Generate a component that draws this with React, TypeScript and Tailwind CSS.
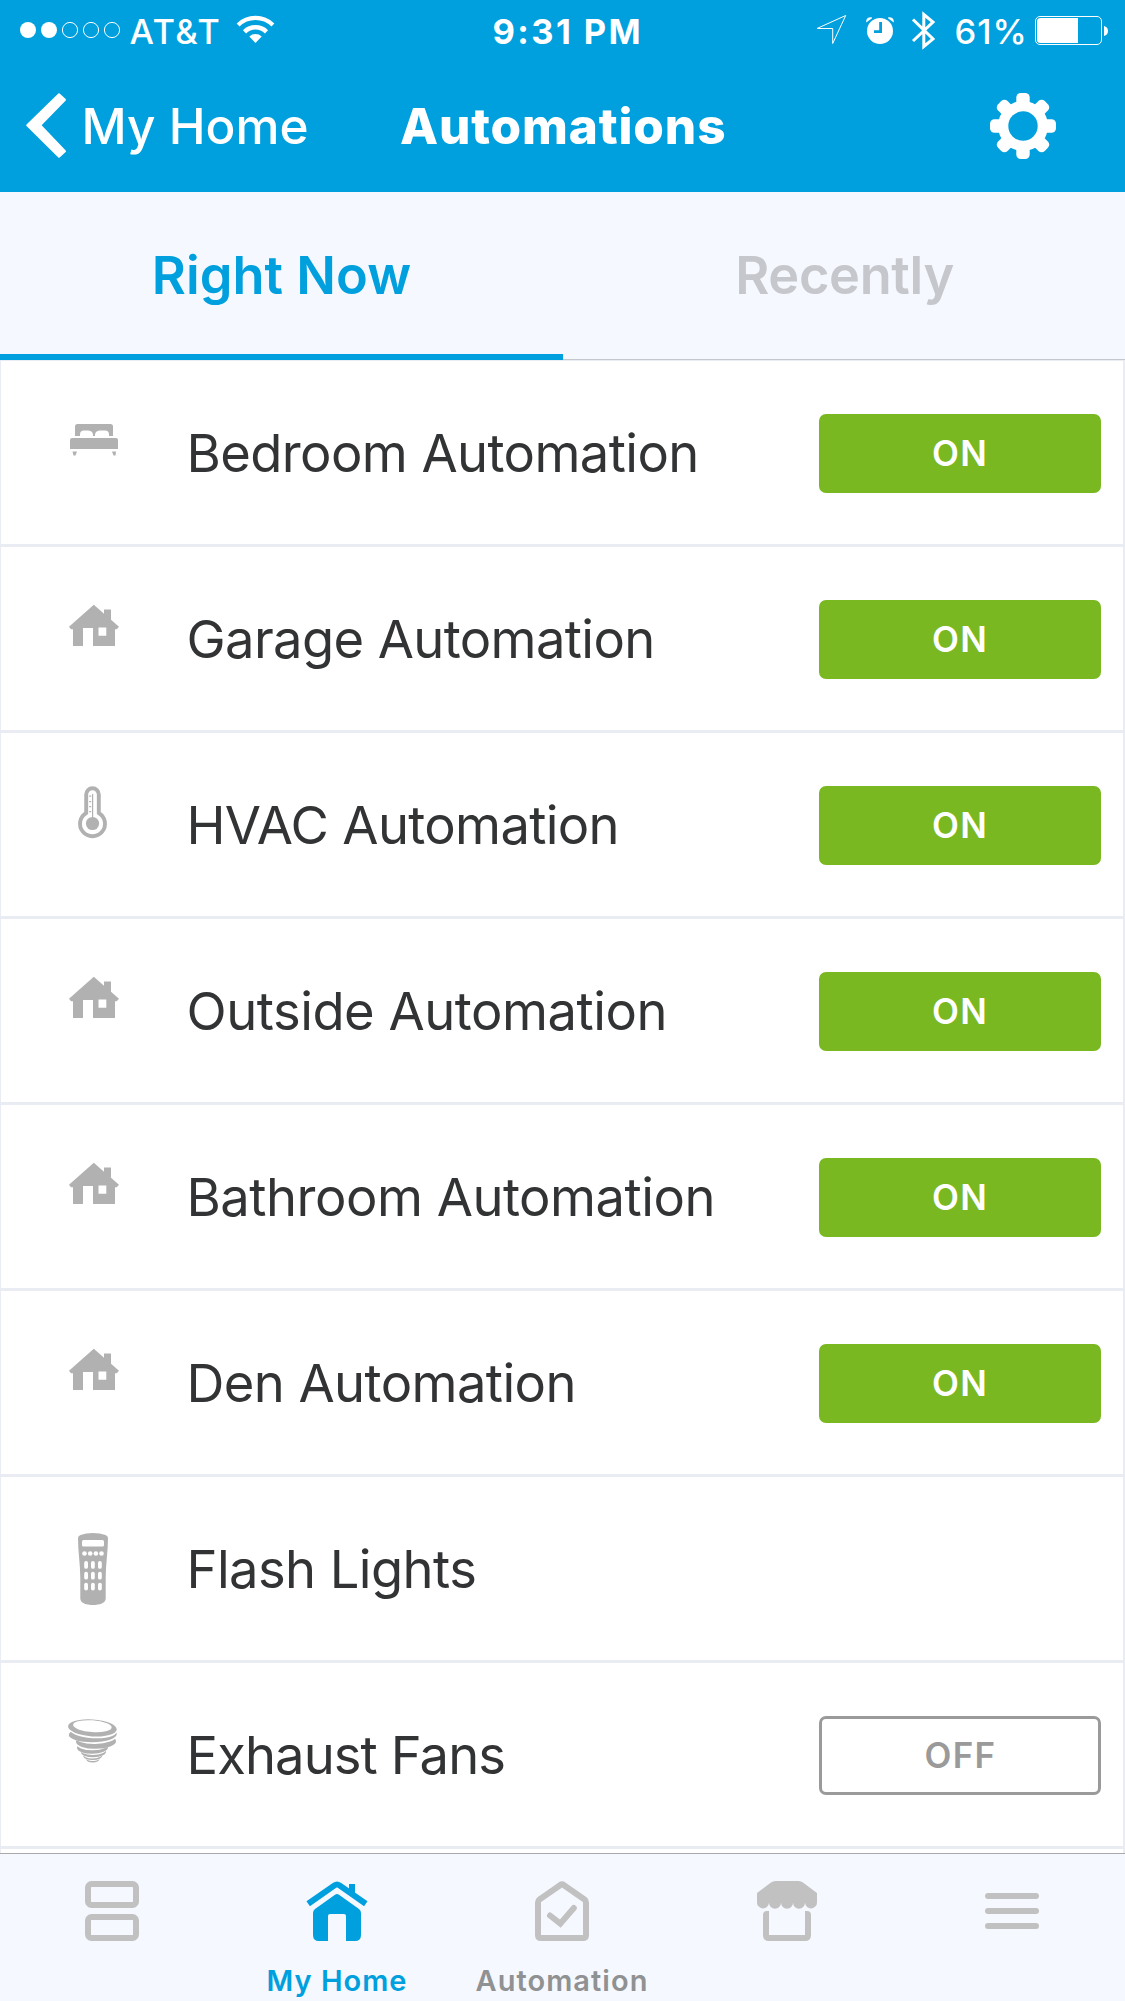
import type { ReactNode } from "react";

type IconName = "bed" | "house" | "thermometer" | "remote" | "fan";

const rows: { icon: IconName; label: string; state?: "ON" | "OFF"; tracking: string }[] = [
  { icon: "bed", label: "Bedroom Automation", state: "ON", tracking: "tracking-[-0.6px]" },
  { icon: "house", label: "Garage Automation", state: "ON", tracking: "tracking-[-0.62px]" },
  { icon: "thermometer", label: "HVAC Automation", state: "ON", tracking: "tracking-[-0.67px]" },
  { icon: "house", label: "Outside Automation", state: "ON", tracking: "tracking-[-0.48px]" },
  { icon: "house", label: "Bathroom Automation", state: "ON", tracking: "tracking-[-0.5px]" },
  { icon: "house", label: "Den Automation", state: "ON", tracking: "tracking-[-0.58px]" },
  { icon: "remote", label: "Flash Lights", tracking: "tracking-[-0.58px]" },
  { icon: "fan", label: "Exhaust Fans", state: "OFF", tracking: "tracking-[-0.9px]" },
];

// Whirl bands from the bottom up: cx, cy, rx, ry and whether the ellipse is a gap.
const whirl: [number, number, number, number, boolean][] = [
  [92.8, 96.5, 6.5, 2.9, false],
  [92.8, 93.5, 8, 4.6, true],
  [92.8, 93, 9.5, 4, false],
  [92.8, 89.5, 11, 6, true],
  [93.5, 89, 12.5, 5.3, false],
  [93, 85.5, 14, 6.5, true],
  [92.5, 84.5, 15.5, 6.3, false],
  [93, 80.3, 17, 7, true],
  [96, 78.5, 20, 7.3, false],
  [95, 73.5, 21, 7.5, true],
  [92.8, 71.5, 24, 7.8, false],
  [92.8, 67.2, 23.8, 8, true],
  [92.4, 64.9, 24.4, 8.5, false],
  [92.4, 63.2, 19.3, 5.9, true],
];

const glyphs: Record<IconName, ReactNode> = {
  bed: (
    <>
      <path d="M75 75V65.5q0-2.5 2.500-2.500h33q2.500 0 2.500 2.500V75h-4v-1.500q0-4-4-4h-4.500q-5 0-5.500 4V75h-2v-1.500q-.5-4-5.500-4H84q-4 0-4 4V75z" />
      <path d="M72 77h44q2 0 2 2v9H70v-9q0-2 2-2z" />
      <path d="M72.500 90.500h4.500l-1.500 4h-2zM112 90.500h4l-.5 4h-2z" />
    </>
  ),
  house: (
    <path
      fillRule="evenodd"
      d="M93.800 57.700L104 66.700V62.500h7v10.300l8 7-2.300 2.500H115V99H93V81H83v18H73V82.300h-2L69 79.700zM98.500 80.500v8.300h7.800v-8.300z"
    />
  ),
  thermometer: (
    <>
      <path
        d="M86.200 61.500a6.300 6.300 0 0 1 12.600 0V80a12.500 12.500 0 1 1-12.600 0z"
        fill="none"
        stroke="#b1b1b1"
        strokeWidth="3.900"
      />
      <circle cx="92.500" cy="90.500" r="6.600" />
      <path d="M92 61h1.200v24H92zM89.200 62.500h2v1.200h-2zM89.200 68h2v1.200h-2zM89.200 73h2v1.200h-2zM89.200 78h2v1.200h-2z" />
    </>
  ),
  remote: (
    <>
      <path d="M78 61q0-2 2.500-3Q86 56 93 56t12.500 2q2.500 1 2.500 3c0 14-2.300 26-2.300 40v20.500c0 4.500-6 6.500-12.700 6.500s-12.700-2-12.700-6.500V101c0-14-2.300-26-2.300-40z" />
      <g fill="#fff">
        <rect x="82" y="63" width="22" height="6.500" rx="1.500" />
        {[84.5, 90.2, 95.9, 101.5].map((x) => (
          <circle key={x} cx={x} cy="76.500" r="2.300" />
        ))}
        {[84.2, 91, 98].map((x) =>
          [84, 94.8, 105.7].map((y) => (
            <rect key={`${x}-${y}`} x={x} y={y} width="3.800" height="7.800" rx="1.900" />
          )),
        )}
      </g>
    </>
  ),
  fan: (
    <>
      {whirl.map(([cx, cy, rx, ry, gap]) => (
        <ellipse
          key={cy}
          cx={cx}
          cy={cy}
          rx={rx}
          ry={ry}
          fill={gap ? "#fff" : "#b1b1b1"}
          transform={`rotate(${cy < 68 ? 4 : -1} ${cx} ${cy})`}
        />
      ))}
    </>
  ),
};

function StatusBar() {
  return (
    <div className="flex h-[63px] items-center text-[34.5px] leading-none">
      <svg width="129.500" height="63" viewBox="0 0 129.500 63" className="shrink-0">
        <circle cx="28" cy="30" r="8" fill="#fff" />
        <circle cx="49" cy="30" r="8" fill="#fff" />
        {[70, 91, 112].map((x) => (
          <circle key={x} cx={x} cy="30" r="7.600" fill="none" stroke="#fff" />
        ))}
      </svg>
      <span className="w-[105.500px] whitespace-nowrap pt-[2px] font-medium tracking-[1.43px]">AT&amp;T</span>
      <svg width="42" height="63" viewBox="235 0 42 63" className="shrink-0">
        <g fill="none" stroke="#fff">
          <path d="M238.100 25A25 25 0 0 1 272.900 25" strokeWidth="4.200" />
          <path d="M244.500 31.800A15.800 15.800 0 0 1 266.500 31.800" strokeWidth="4.500" />
        </g>
        <path d="M255.500 43L249.300 36.600A9 9 0 0 1 261.700 36.600z" fill="#fff" />
      </svg>
      <span className="ml-[215.500px] w-[317.500px] whitespace-nowrap pt-[2px] font-bold tracking-[2.4px]">9:31 PM</span>
      <svg width="144" height="63" viewBox="810 0 144 63" className="shrink-0">
        <path d="M817 28.500L845.700 15.500 832.700 43.500V28.500z" fill="none" stroke="#fff" strokeWidth="1" />
        <circle cx="880" cy="31" r="13" fill="#fff" />
        <path d="M866.200 22.500q-.6-5.500 5.500-5.300l.3 1zM893.800 22.500q.6-5.500-5.500-5.300l-.3 1z" fill="#fff" />
        <path d="M880.600 22v9.600H874" fill="none" stroke="#00a0de" strokeWidth="2.800" />
        <path
          d="M913 19.500L933 39 923.800 46.500V14.500L933 22 913 41"
          fill="none"
          stroke="#fff"
          strokeWidth="3"
          strokeMiterlimit="3"
        />
      </svg>
      <span className="w-[78px] whitespace-nowrap pl-[0.500px] pt-[2px] font-medium tracking-[1px]">61%</span>
      <svg width="80" height="63" viewBox="1032 0 80 63" className="shrink-0">
        <rect x="1035.500" y="16.500" width="66" height="28" rx="4.500" fill="none" stroke="#fff" />
        <path d="M1078 18h-37.500q-3.500 0-3.500 3.500v18q0 3.500 3.500 3.500h37.500z" fill="#fff" />
        <path d="M1104 26q4 1 4 5t-4 5z" fill="#fff" />
      </svg>
    </div>
  );
}

function NavBar() {
  return (
    <div className="flex h-[126px] items-center text-[49.5px] leading-none">
      <svg width="81.500" height="126" viewBox="0 63 81.500 126" className="shrink-0">
        <path
          d="M27.200 125.300L59 94.300 65 99.800 40.200 125.300 65 151.200 59 156.700z"
          fill="#fff"
          stroke="#fff"
          strokeWidth="2"
          strokeLinejoin="round"
        />
      </svg>
      <span className="w-[318.500px] whitespace-nowrap pt-[2px] font-medium">My Home</span>
      <span className="w-[580px] whitespace-nowrap pt-[2px] font-extrabold tracking-[0.85px]">Automations</span>
      <svg width="86" height="126" viewBox="980 63 86 126" className="shrink-0">
        {[0, 45, 90, 135].map((a) => (
          <rect key={a} x="1016.300" y="93" width="13.400" height="66" rx="4.500" fill="#fff" transform={`rotate(${a} 1023 126)`} />
        ))}
        <circle cx="1023" cy="126" r="25" fill="#fff" />
        <circle cx="1023" cy="126" r="14.700" fill="#00a0de" />
      </svg>
    </div>
  );
}

function Tabs() {
  return (
    <div className="flex h-[168px] text-[52.3px] font-semibold leading-none">
      <div className="flex w-[563px] items-center justify-center border-b-6 border-[#00a0de] pt-[4px] tracking-[0.05px] text-[#00a0de]">
        Right Now
      </div>
      <div className="flex flex-1 items-center justify-center border-b border-[#c4c8cd] pb-[1px] tracking-[-0.32px] text-[#c6c7cc]">
        <span className="pl-[1px]">Recently</span>
      </div>
    </div>
  );
}

function AutomationList() {
  return (
    <div className="h-[1493px] overflow-hidden border-l border-r-2 border-t border-[#e9edf3] bg-white">
      {rows.map((r) => (
        <div key={r.label} className="flex h-[186px] items-center border-b-3 border-[#e9edf3]">
          <svg width="185.500" height="183" viewBox="1 0 185.500 183" fill="#b1b1b1" className="shrink-0">
            {glyphs[r.icon]}
          </svg>
          <span className={`flex-1 whitespace-nowrap pt-[1px] text-[52.5px] leading-none text-[#323334] ${r.tracking}`}>
            {r.label}
          </span>
          {r.state === "ON" && (
            <button className="mr-[22px] mt-[2px] h-[79px] w-[282px] rounded-[7px] bg-[#79b821] text-[35px] font-semibold leading-none tracking-[1.3px] text-white">
              ON
            </button>
          )}
          {r.state === "OFF" && (
            <button className="mr-[22px] mt-[2px] h-[79px] w-[282px] rounded-[7px] border-3 border-[#9a9a9a] pl-[1px] text-[35px] font-semibold leading-none tracking-[1.3px] text-[#9a9a9a]">
              OFF
            </button>
          )}
        </div>
      ))}
    </div>
  );
}

const bottomTabs: { label?: string; color: string; art: ReactNode; tracking: string }[] = [
  {
    color: "text-[#c1c1c1]",
    tracking: "",
    art: (
      <g fill="none" stroke="currentColor" strokeWidth="6">
        <rect x="88" y="1884" width="48" height="21" rx="3.500" />
        <rect x="88" y="1917" width="48" height="21" rx="3.500" />
      </g>
    ),
  },
  {
    label: "My Home",
    color: "text-[#00a0de]",
    tracking: "tracking-[1.01px]",
    art: (
      <>
        <path
          d="M308.200 1903.800L334.500 1885.400Q337 1883.600 339.500 1885.400L365.800 1903.800"
          fill="none"
          stroke="currentColor"
          strokeWidth="6"
        />
        <path d="M349 1884h6v11l-6-4z" fill="currentColor" />
        <path
          d="M335 1894.800q2-1.400 4 0L359 1909q2 1.500 2 4v22q0 6-6 6h-9V1916q0-2-2-2h-14q-2 0-2 2v25h-9q-6 0-6-6v-22q0-2.500 2-4z"
          fill="currentColor"
        />
      </>
    ),
  },
  {
    label: "Automation",
    color: "text-[#c1c1c1]",
    tracking: "tracking-[1.06px]",
    art: (
      <g fill="none" stroke="currentColor" strokeWidth="6">
        <path d="M560 1885.200q2-1.500 4 0L584.500 1899.500q1.500 1 1.500 3V1935q0 3-3 3h-42q-3 0-3-3v-32.500q0-2 1.500-3z" />
        <path d="M550 1915.500L560.300 1923.700 573.800 1908" strokeLinecap="round" />
      </g>
    ),
  },
  {
    color: "text-[#c1c1c1]",
    tracking: "",
    art: (
      <>
        <path
          d="M757 1893L771 1882.500q2-1.500 4.500-1.500h23q2.500 0 4.500 1.500L817 1893v9a6 6 0 0 1-12 .8a6 6 0 0 1-12 0a6 6 0 0 1-12 0a6 6 0 0 1-12 0a6 6 0 0 1-12-.8z"
          fill="currentColor"
        />
        <path d="M763 1915q0-4 4-4h2v24h36v-24h2q4 0 4 4v20q0 6-6 6h-36q-6 0-6-6z" fill="currentColor" />
      </>
    ),
  },
  {
    color: "text-[#c1c1c1]",
    tracking: "",
    art: (
      <g fill="currentColor">
        <rect x="985" y="1893" width="54" height="6" rx="3" />
        <rect x="985" y="1908" width="54" height="6" rx="3" />
        <rect x="985" y="1923" width="54" height="6" rx="3" />
      </g>
    ),
  },
];

function BottomBar() {
  return (
    <div className="flex h-[148px] border-t border-[#a9a9ad] bg-[#f5f8ff]">
      {bottomTabs.map((t, i) => (
        <div key={i} className={`flex w-[225px] flex-col items-center ${t.color}`}>
          <svg width="225" height="105" viewBox={`${i * 225} 1854 225 105`} className="shrink-0">
            {t.art}
          </svg>
          {t.label && (
            <span
              className={`mr-[1px] flex h-[43px] items-center whitespace-nowrap text-[29px] font-semibold leading-none ${t.tracking} ${
                i === 2 ? "text-[#8f9192]" : ""
              }`}
            >
              {t.label}
            </span>
          )}
        </div>
      ))}
    </div>
  );
}

export default function App() {
  return (
    <div className="flex h-[2001px] w-[1125px] flex-col overflow-hidden bg-[#f5f8ff] font-['Inter',sans-serif]">
      <header className="h-[192px] bg-[#00a0de] text-white">
        <StatusBar />
        <NavBar />
      </header>
      <Tabs />
      <AutomationList />
      <BottomBar />
    </div>
  );
}
